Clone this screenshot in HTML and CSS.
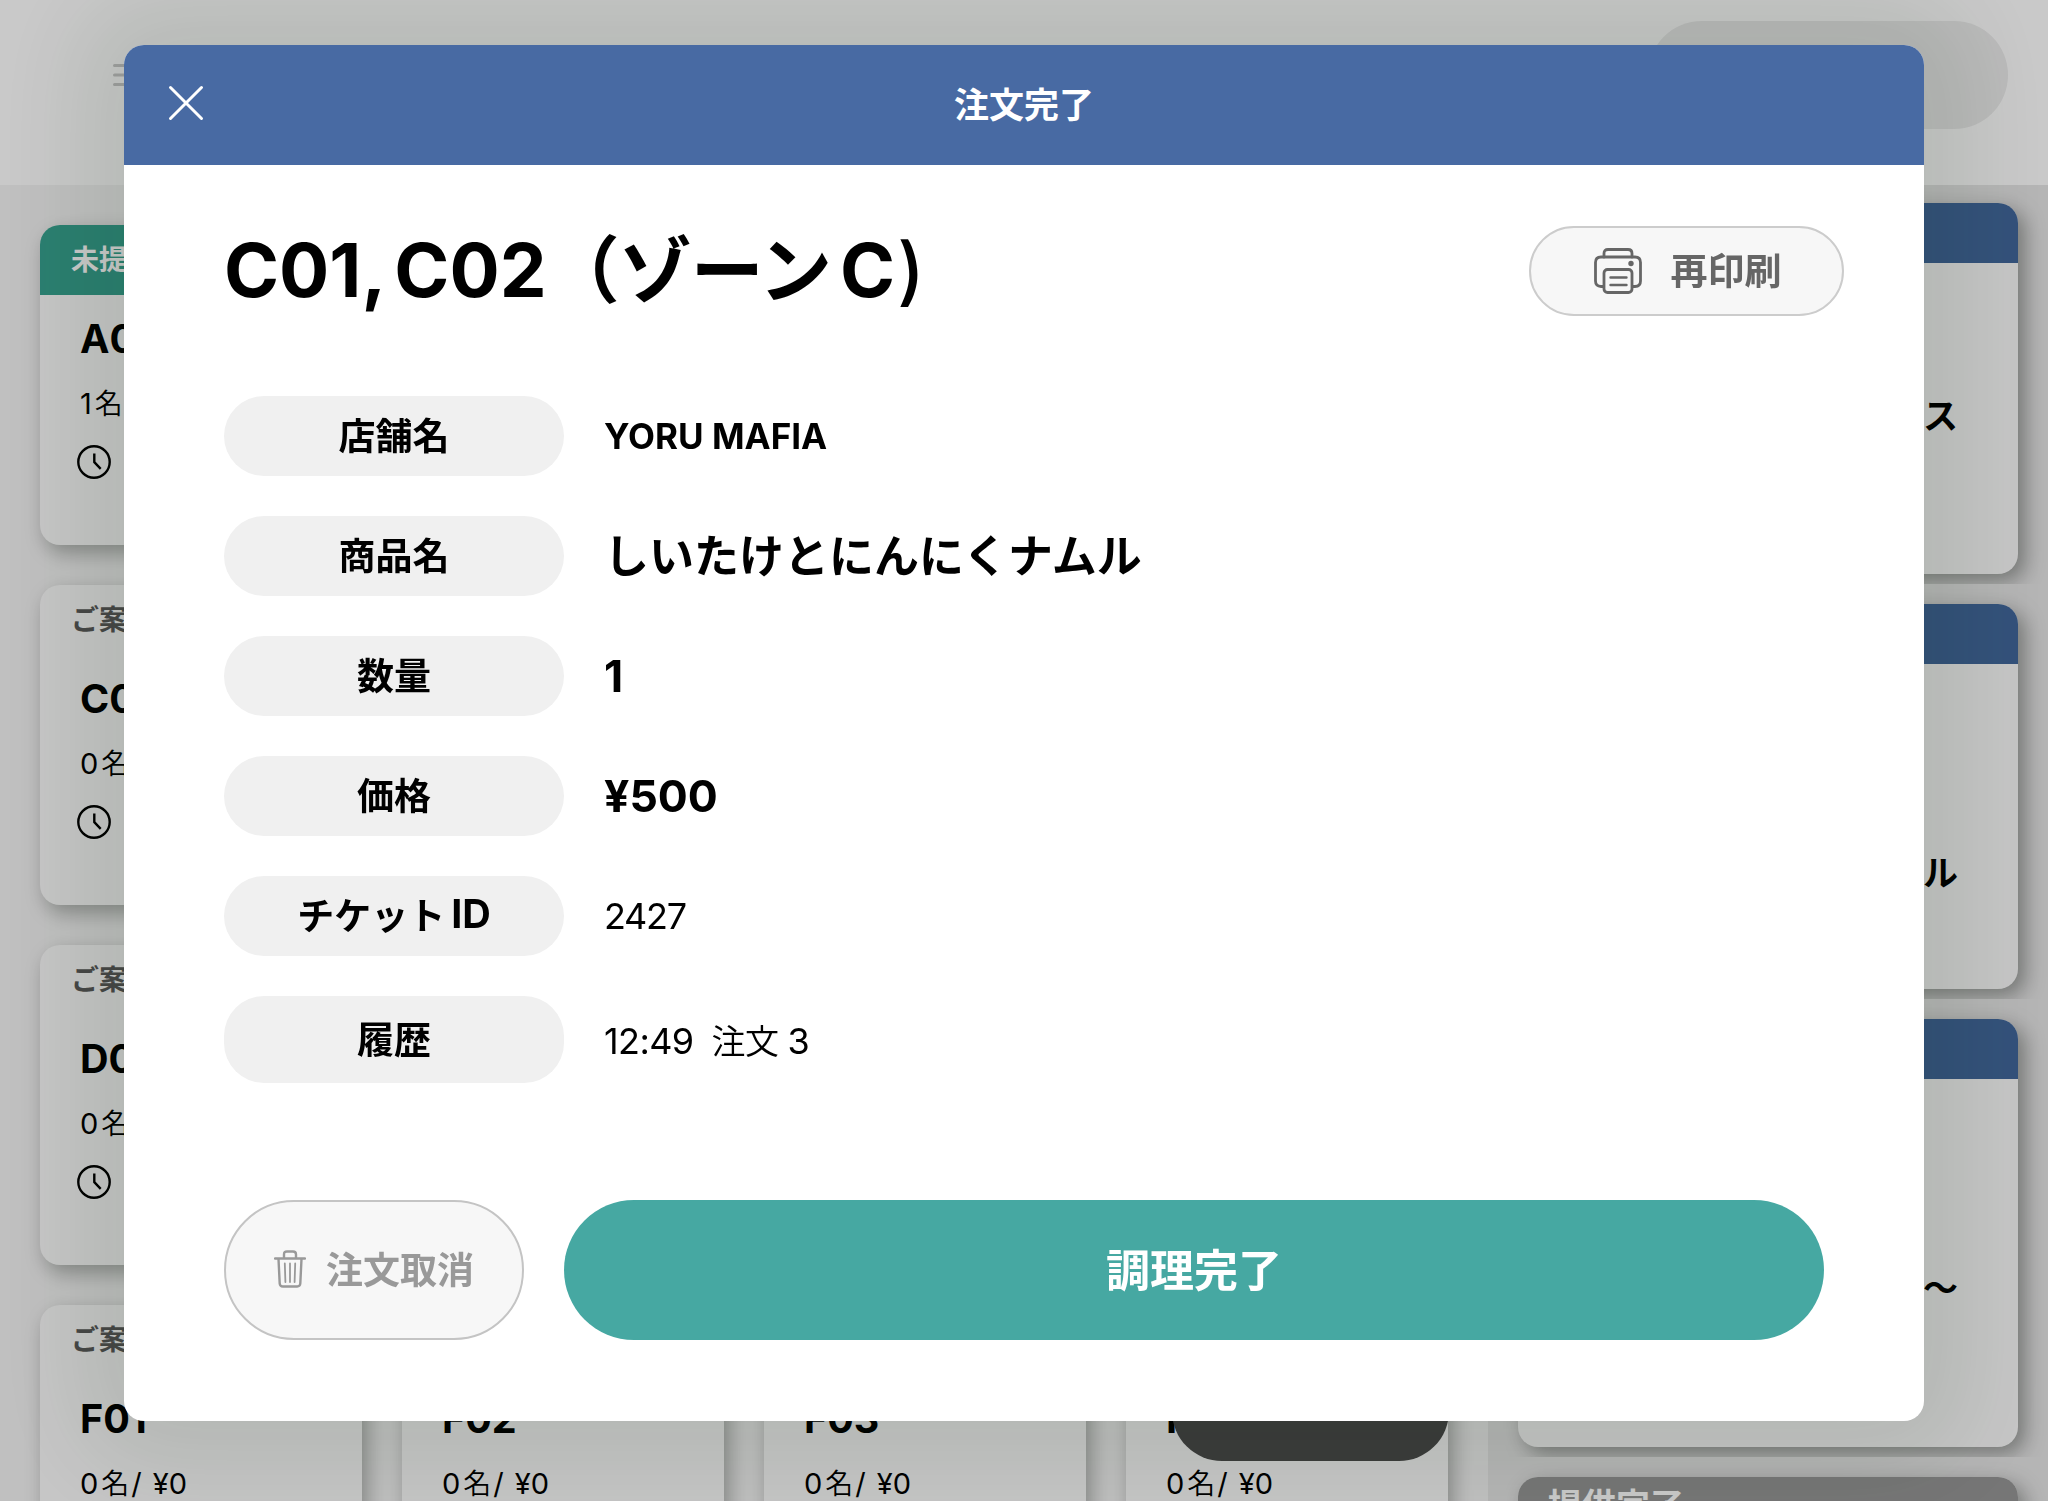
FILE: index.html
```
<!DOCTYPE html>
<html lang="ja">
<head>
    <meta charset="UTF-8">
    <meta name="viewport" content="width=device-width, initial-scale=1.0">
    <title>注文完了</title>
    <link rel="stylesheet" href="styles.css">
</head>
<body>
    <svg class="defs" width="0" height="0">
        <symbol id="clock" viewBox="0 0 34 34">
            <circle cx="17" cy="17" r="15.7"/>
            <path d="M17.3 8.5v8.7l6.4 6.6"/>
        </symbol>
    </svg>

    <div class="page">
        <header class="topbar">
            <svg class="menu-icon" viewBox="0 0 34 24"><path d="M1.5 2.5h31M1.5 12h31M1.5 21.5h31"/></svg>
            <div class="search"></div>
        </header>

        <div class="board">
            <main class="tables">
                <section class="card active">
                    <h3 class="card-head">未提供</h3>
                    <h2>A01</h2>
                    <p>1<i>名</i>/<span>¥0</span></p>
                    <svg class="clock"><use href="#clock"/></svg>
                </section>
                <section class="card first">
                    <h3 class="card-head">ご案内</h3>
                    <h2>C01</h2>
                    <p>0<i>名</i>/<span>¥0</span></p>
                    <svg class="clock"><use href="#clock"/></svg>
                </section>
                <section class="card first">
                    <h3 class="card-head">ご案内</h3>
                    <h2>D01</h2>
                    <p>0<i>名</i>/<span>¥0</span></p>
                    <svg class="clock"><use href="#clock"/></svg>
                </section>
                <section class="card first">
                    <h3 class="card-head">ご案内</h3>
                    <h2>F01</h2>
                    <p>0<i>名</i>/<span>¥0</span></p>
                </section>
                <section class="card">
                    <h3 class="card-head">ご案内</h3>
                    <h2>F02</h2>
                    <p>0<i>名</i>/<span>¥0</span></p>
                </section>
                <section class="card">
                    <h3 class="card-head">ご案内</h3>
                    <h2>F03</h2>
                    <p>0<i>名</i>/<span>¥0</span></p>
                </section>
                <section class="card">
                    <h3 class="card-head">ご案内</h3>
                    <h2>F04</h2>
                    <p>0<i>名</i>/<span>¥0</span></p>
                </section>
                <div class="float-button"></div>
            </main>

            <aside class="orders">
                <div class="order-wrap">
                    <section class="order order-a"><div class="order-head"></div><p>ス</p></section>
                </div>
                <div class="order-wrap">
                    <section class="order order-b"><div class="order-head"></div><p>ル</p></section>
                </div>
                <div class="order-wrap">
                    <section class="order order-c"><div class="order-head"></div><p>〜</p></section>
                </div>
                <section class="order done">
                    <div class="order-head">提供完了</div>
                </section>
            </aside>
        </div>
    </div>

    <div class="overlay">
        <div class="modal">
            <div class="modal-head">
                <svg class="close" viewBox="0 0 36 36"><path d="M2.5 2.5l31 31M33.5 2.5l-31 31"/></svg>
                <span>注文完了</span>
            </div>
            <div class="modal-body">
                <div class="title-row">
                    <h1>C01,<span class="second">C02</span><span class="zone">（ゾーン</span><span class="zone-end">C<span class="paren">)</span></span></h1>
                    <button class="reprint">
                        <svg class="printer" viewBox="0 0 48 46">
                            <path d="M10 9V5.500q0-4 4-4h20q4 0 4 4V9"/>
                            <path d="M9.500 38.500H7q-5.500 0-5.500-5.500V14.500Q1.500 9 7 9h34q5.500 0 5.500 5.500V33q0 5.500-5.500 5.500h-2.500"/>
                            <rect x="10" y="21.500" width="28" height="23" rx="3.500"/>
                            <path class="thin" d="M16.500 29.500h16M16.500 37h16"/>
                            <circle cx="37" cy="15.500" r="2.700"/>
                        </svg>
                        <span>再印刷</span>
                    </button>
                </div>

                <dl class="details">
                    <dt>店舗名</dt>
                    <dd class="shop">YORU MAFIA</dd>
                    <dt>商品名</dt>
                    <dd class="item">しいたけとにんにくナムル</dd>
                    <dt>数量</dt>
                    <dd class="number">1</dd>
                    <dt>価格</dt>
                    <dd class="number">¥500</dd>
                    <dt>チケット<span class="latin">ID</span></dt>
                    <dd class="ticket">2427</dd>
                    <dt>履歴</dt>
                    <dd class="history">12:49<span>注文</span>3</dd>
                </dl>

                <div class="actions">
                    <button class="cancel">
                        <svg class="trash" viewBox="0 0 32 38">
                            <path d="M1 8.500h30M10 8V4.500q0-3 3-3h6q3 0 3 3V8M4.500 9l1.200 24.500q.2 3 3.200 3h14.200q3 0 3.200-3L27.500 9"/>
                            <path class="thin" d="M10.800 13.500l.6 18.500M16 13.500v18.500M21.200 13.500l-.6 18.500"/>
                        </svg>
                        <span>注文取消</span>
                    </button>
                    <button class="complete"><span>調理完了</span></button>
                </div>
            </div>
        </div>
    </div>
</body>
</html>
```
FILE: styles.css
```
* {
    box-sizing: border-box;
}
body {
    margin: 0;
    height: 1501px;
    overflow: hidden;
    font-family: Inter, "Noto Sans CJK JP", sans-serif;
    color: #000;
}
h1, h2, h3, p, dl, dd {
    margin: 0;
}
svg {
    fill: none;
    stroke: currentColor;
    stroke-linecap: round;
    stroke-linejoin: round;
}
.defs {
    position: absolute;
}

/* order board behind the dialog */
.page {
    height: 1501px;
    overflow: hidden;
}
.topbar {
    height: 185px;
    padding: 21px 40px 0 113px;
    display: flex;
    justify-content: space-between;
    background: #fff;
}
.menu-icon {
    width: 34px;
    height: 24px;
    margin-top: 42px;
    stroke-width: 3;
    color: #ccc;
}
.search {
    width: 360px;
    height: 108px;
    border-radius: 54px;
    background: #ededed;
}
.board {
    display: flex;
    height: 1316px;
}
.tables {
    width: 1488px;
    padding: 40px;
    display: grid;
    grid-template-columns: repeat(4, 322px);
    grid-auto-rows: 320px;
    gap: 40px;
    background: #f4f4f4;
    position: relative;
}
.card {
    border-radius: 20px;
    background: #fbfbfb;
    box-shadow: 5px 8px 20px rgba(0, 10, 0, 0.3);
    overflow: hidden;
}
.card.first, .card.active {
    grid-column: 1;
}
.card-head {
    height: 70px;
    padding-left: 31px;
    font-size: 28px;
    line-height: 70px;
    font-weight: 700;
    color: #5a5a5a;
}
.active .card-head {
    background: #37a28f;
    color: #fff;
}
.card h2 {
    margin: 19px 0 0 40px;
    font-size: 39.5px;
    line-height: 50px;
    font-weight: 700;
}
.card p {
    margin: 20px 0 0 40px;
    font-size: 29px;
    line-height: 40px;
}
.card i {
    font-style: normal;
    font-size: 28px;
    font-weight: 350;
    margin: 0 2px 0 3px;
}
.card p span {
    margin-left: 11px;
}
.clock {
    display: block;
    width: 34px;
    height: 34px;
    margin: 21px 0 0 37px;
    stroke-width: 2.4;
    stroke-linecap: butt;
}
.float-button {
    position: absolute;
    left: 1172px;
    top: 1176px;
    width: 277px;
    height: 100px;
    border-radius: 50px;
    background: #4c4c4c;
}
.orders {
    width: 560px;
    background: #e6e6e6;
}
.order-wrap {
    padding: 20px 30px 10px;
    overflow: hidden;
}
.order-wrap:first-child {
    padding-top: 18px;
}
.order {
    border-radius: 20px;
    background: #fbfbfb;
    box-shadow: 7px 7px 20px rgba(0, 10, 0, 0.35);
    overflow: hidden;
}
.order-a {
    height: 371px;
}
.order-b {
    height: 385px;
}
.order-c {
    height: 428px;
}
.order-head {
    height: 60px;
    background: #42689c;
}
.order p {
    padding-right: 60px;
    text-align: right;
    font-size: 35px;
    line-height: 50px;
    font-weight: 700;
}
.order-a p {
    margin-top: 128px;
}
.order-b p {
    margin-top: 184px;
}
.order-c p {
    margin-top: 184px;
}
.done {
    margin: 20px 30px 0;
    height: 300px;
}
.done .order-head {
    padding: 4px 0 0 30px;
    background: #969696;
    color: #fff;
    font-size: 34px;
    line-height: 50px;
    font-weight: 700;
}

/* dialog */
.overlay {
    position: fixed;
    inset: 0;
    padding: 45px 124px 0;
    background: rgba(0, 0, 0, 0.21);
}
.modal {
    height: 1376px;
    border-radius: 20px;
    background: #fff;
    box-shadow: 0 0 100px 44px rgba(14, 40, 5, 0.1);
    overflow: hidden;
}
.modal-head {
    position: relative;
    height: 120px;
    background: #486aa3;
    color: #fff;
    font-size: 35px;
    line-height: 120px;
    font-weight: 700;
    text-align: center;
}
.close {
    position: absolute;
    left: 44px;
    top: 40px;
    width: 36px;
    height: 36px;
    stroke-width: 3;
}
.modal-body {
    padding: 61px 100px 0;
}
.title-row {
    display: flex;
    justify-content: space-between;
    margin-right: -20px;
    height: 90px;
}
h1 {
    display: flex;
    font-size: 74.5px;
    line-height: 88px;
    font-weight: 700;
    white-space: nowrap;
}
.second {
    margin-left: 8px;
}
.zone {
    padding-top: 1px;
    font-size: 73px;
    letter-spacing: -1px;
}
.zone-end {
    margin-left: 9px;
}
.paren {
    margin-left: 2px;
    font-weight: 550;
}
button {
    display: flex;
    align-items: center;
    justify-content: center;
    padding: 0;
    border: 2px solid #ccc;
    background: #f7f7f7;
    font-family: inherit;
    font-weight: 700;
}
button span {
    padding-bottom: 5px;
}
.reprint {
    width: 315px;
    height: 90px;
    gap: 29px;
    padding-left: 2px;
    border-radius: 45px;
    color: #666;
    font-size: 37px;
}
.printer {
    width: 48px;
    height: 46px;
    stroke-width: 2.8;
}
.printer circle {
    fill: currentColor;
    stroke: none;
}
.printer .thin {
    stroke-width: 2.4;
}
.details {
    display: grid;
    grid-template-columns: 340px 1fr;
    grid-template-rows: repeat(5, 80px) 87px;
    gap: 40px;
    margin-top: 80px;
    align-items: center;
}
.details dt {
    height: 100%;
    padding-bottom: 4px;
    border-radius: 40px;
    display: flex;
    align-items: center;
    justify-content: center;
    background: #f0f0f0;
    font-size: 37px;
    font-weight: 700;
}
.details dd {
    font-size: 36px;
}
.details .latin {
    margin-left: 6px;
    font-size: 39.5px;
}
.details .shop {
    font-weight: 650;
    font-size: 35px;
}
.details .item {
    margin-bottom: 6px;
    font-size: 45px;
    font-weight: 700;
}
.details .number {
    font-size: 44.5px;
    font-weight: 700;
}
.ticket {
    letter-spacing: -1.3px;
}
.history {
    letter-spacing: -0.6px;
}
.history span {
    margin: 0 9px 0 18px;
    font-size: 34px;
    font-weight: 350;
}
.actions {
    display: flex;
    gap: 40px;
    margin-top: 117px;
}
.cancel {
    width: 300px;
    height: 140px;
    gap: 20px;
    border-radius: 70px;
    border-color: #c4c4c4;
    color: #999;
    font-size: 37px;
}
.trash {
    width: 32px;
    height: 38px;
    margin-bottom: 3px;
    stroke-width: 2.4;
}
.trash .thin {
    stroke-width: 1.8;
}
.complete {
    width: 1260px;
    border: 0;
    border-radius: 70px;
    background: #46a8a2;
    color: #fff;
    font-size: 44px;
}
```
